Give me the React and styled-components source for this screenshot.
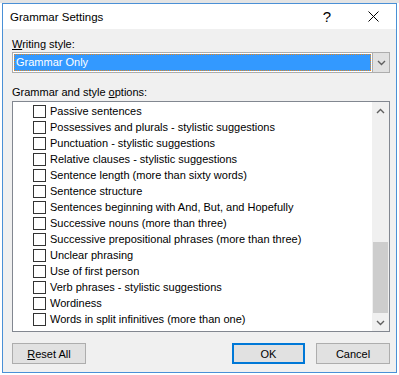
import React from 'react';
import styled, { createGlobalStyle } from 'styled-components';

const Global = createGlobalStyle`
  *, *::before, *::after { box-sizing: border-box; }
  html, body { margin: 0; padding: 0; }
  body {
    width: 399px;
    height: 375px;
    overflow: hidden;
    background: #ffffff;
    font-family: "Liberation Sans", Arial, sans-serif;
    font-size: 11px;
    color: #000;
  }
`;

const Desktop = styled.div`
  width: 399px;
  height: 375px;
  position: relative;
  background: linear-gradient(#e4e4e4 0 3px, #ffffff 3px);
`;

const Dialog = styled.div`
  position: absolute;
  left: 2px;
  top: 3px;
  width: 395px;
  height: 370px;
  border: 1px solid #4a90d6;
  background: #f0f0f0;
  display: flex;
  flex-direction: column;
`;

const TitleBar = styled.div`
  height: 25px;
  background: #ffffff;
  display: flex;
  align-items: center;
  padding-left: 7px;
  font-size: 11.5px;
`;

const Title = styled.div`
  flex: 1;
`;

const TitleBtn = styled.div`
  width: 46px;
  height: 25px;
  display: flex;
  align-items: center;
  justify-content: center;
  font-size: ${p => p.$size || 14}px;
`;

const Body = styled.div`
  padding: 0 6px 0 9px;
  display: flex;
  flex-direction: column;
`;

const Label = styled.div`
  margin-top: ${p => p.$top}px;
  height: 14px;
  line-height: 14px;
`;

const U = styled.span`
  text-decoration: underline;
`;

const Combo = styled.div`
  margin-top: 1px;
  height: 21px;
  border: 1px solid #adadad;
  background: #ffffff;
  display: flex;
  padding: 1px 0 1px 1px;
`;

const ComboValue = styled.div`
  flex: 1;
  background: #3399ff;
  color: #ffffff;
  outline: 1px dotted #e8871e;
  outline-offset: -1px;
  padding-left: 2px;
  line-height: 17px;
`;

const ComboBtn = styled.div`
  width: 17px;
  margin: -1px 0 -1px 1px;
  background: #e1e1e1;
  border-left: 1px solid #adadad;
  display: flex;
  align-items: center;
  justify-content: center;
`;

const ListBox = styled.div`
  margin-top: 2px;
  height: 231px;
  border: 1px solid #828790;
  background: #ffffff;
  display: flex;
`;

const Items = styled.div`
  flex: 1;
  padding-top: 1px;
`;

const Row = styled.div`
  height: 16px;
  display: flex;
  align-items: center;
  padding-left: 20px;
`;

const Box = styled.span`
  width: 13px;
  height: 13px;
  border: 1px solid #333333;
  background: #ffffff;
  margin-right: 4px;
  flex: none;
`;

const ScrollBar = styled.div`
  width: 17px;
  background: #f0f0f0;
  display: flex;
  flex-direction: column;
`;

const Arrow = styled.div`
  height: 17px;
  display: flex;
  align-items: center;
  justify-content: center;
`;

const Track = styled.div`
  flex: 1;
  display: flex;
  flex-direction: column;
  justify-content: flex-end;
  padding: 0 1px 1px;
`;

const Thumb = styled.div`
  height: 71px;
  background: #cdcdcd;
`;

const Buttons = styled.div`
  margin-top: 11px;
  display: flex;
  align-items: center;
`;

const Button = styled.div`
  width: ${p => p.$w}px;
  height: 21px;
  border: ${p => (p.$primary ? '2px solid #0078d7' : '1px solid #adadad')};
  background: #e1e1e1;
  display: flex;
  align-items: center;
  justify-content: center;
  margin-left: ${p => p.$ml || 0}px;
`;

const Chevron = ({ up }) => (
  <svg width="9" height="6" viewBox="0 0 9 6">
    <path
      d={up ? 'M1 5 L4.5 1.5 L8 5' : 'M1 1 L4.5 4.5 L8 1'}
      fill="none"
      stroke="#606060"
      strokeWidth="1.4"
    />
  </svg>
);

const options = [
  'Passive sentences',
  'Possessives and plurals - stylistic suggestions',
  'Punctuation - stylistic suggestions',
  'Relative clauses - stylistic suggestions',
  'Sentence length (more than sixty words)',
  'Sentence structure',
  'Sentences beginning with And, But, and Hopefully',
  'Successive nouns (more than three)',
  'Successive prepositional phrases (more than three)',
  'Unclear phrasing',
  'Use of first person',
  'Verb phrases - stylistic suggestions',
  'Wordiness',
  'Words in split infinitives (more than one)',
];

export default function App() {
  return (
    <Desktop>
      <Global />
      <Dialog>
        <TitleBar>
          <Title>Grammar Settings</Title>
          <TitleBtn $size={15}>?</TitleBtn>
          <TitleBtn>
            <svg width="11" height="11" viewBox="0 0 11 11">
              <path d="M0.5 0.5 L10.5 10.5 M10.5 0.5 L0.5 10.5" stroke="#000" strokeWidth="1" />
            </svg>
          </TitleBtn>
        </TitleBar>
        <Body>
          <Label $top={8}>
            <U>W</U>riting style:
          </Label>
          <Combo>
            <ComboValue>Grammar Only</ComboValue>
            <ComboBtn>
              <Chevron />
            </ComboBtn>
          </Combo>
          <Label $top={12}>
            Grammar and style <U>o</U>ptions:
          </Label>
          <ListBox>
            <Items>
              {options.map(o => (
                <Row key={o}>
                  <Box />
                  {o}
                </Row>
              ))}
            </Items>
            <ScrollBar>
              <Arrow>
                <Chevron up />
              </Arrow>
              <Track>
                <Thumb />
              </Track>
              <Arrow>
                <Chevron />
              </Arrow>
            </ScrollBar>
          </ListBox>
          <Buttons>
            <Button $w={74}>
              <span>
                <U>R</U>eset All
              </span>
            </Button>
            <Button $w={73} $primary $ml={146}>OK</Button>
            <Button $w={74} $ml={11}>Cancel</Button>
          </Buttons>
        </Body>
      </Dialog>
    </Desktop>
  );
}
